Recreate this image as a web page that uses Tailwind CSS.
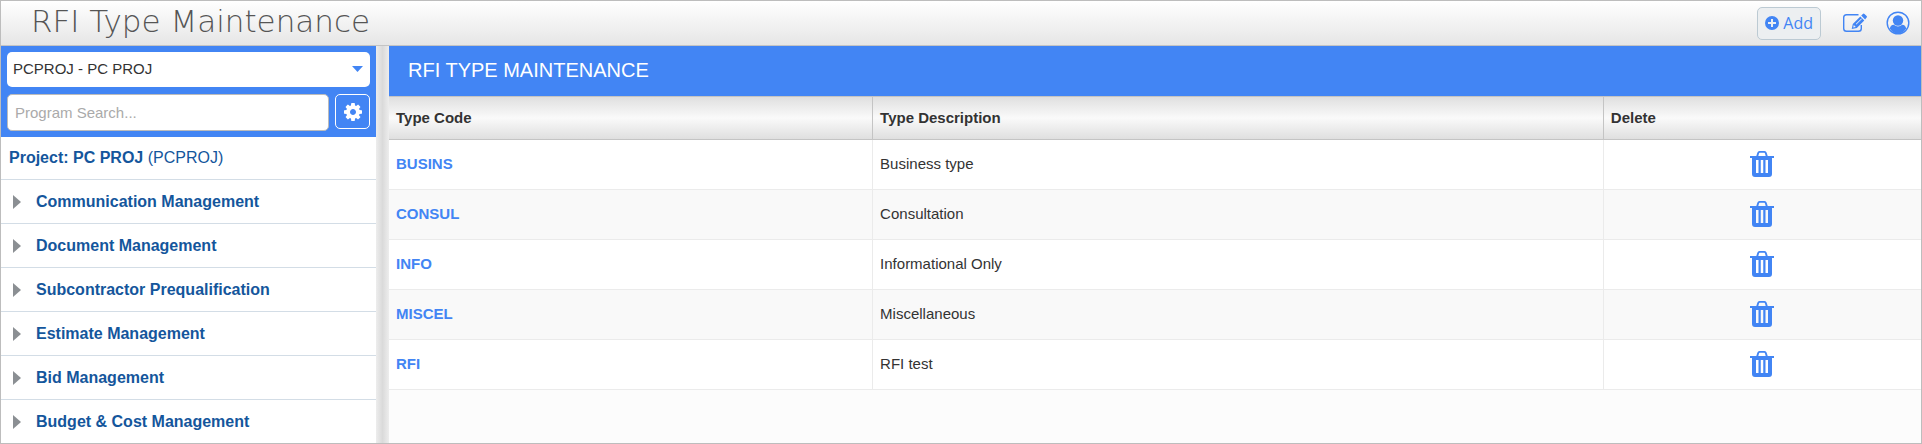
<!DOCTYPE html>
<html lang="en">
  <head>
    <meta charset="UTF-8" />
    <meta name="viewport" content="width=device-width, initial-scale=1.0" />
    <title>RFI Type Maintenance</title>
    <script src="https://cdn.jsdelivr.net/npm/@tailwindcss/browser@4"></script>
  </head>
  <body class="flex flex-col h-screen overflow-hidden border border-[#bdbdbd] bg-white font-['Liberation_Sans',Arial,sans-serif] text-[15px] text-[#333]">
    <!-- shared icons -->
    <svg class="hidden">
      <symbol id="trash" viewBox="0 0 24 26">
        <path fill-rule="evenodd" d="M0 5h6.300L7.300 1.800Q7.800 0 9.500 0h5Q16.200 0 16.700 1.800L17.700 5H24v2h-2v16q0 3-3 3H5q-3 0-3-3V7H0zM8.300 5h7.400l-.7-2.500Q14.800 1.800 14.300 1.800H9.700Q9.200 1.800 9 2.500zM6 9v13h2.500V9zm4.750 0v13h2.500V9zm4.750 0v13H18V9z" />
      </symbol>
      <symbol id="arrow" viewBox="0 0 8 14">
        <path d="M0 0l8 7-8 7z" />
      </symbol>
    </svg>

    <!-- top bar -->
    <header class="flex items-center justify-between h-[45px] shrink-0 border-b border-[#c4c4c4] bg-linear-to-b from-white to-[#e6e6e6] pl-[30px] pr-[11px]">
      <h1 class="font-['DejaVu_Sans',sans-serif] font-extralight text-[31px] leading-8 pb-1 text-[#555]">RFI Type Maintenance</h1>
      <div class="flex items-center">
        <button type="button" class="flex items-center gap-1 h-[33px] px-[7px] mr-[22px] rounded-[5px] border border-[#bccad3] bg-[#eceff1] font-['Open_Sans',sans-serif] text-base text-[#4285f4]">
          <svg class="size-[14px]" viewBox="0 0 14 14" fill="currentColor"><path fill-rule="evenodd" d="M7 0a7 7 0 1 1 0 14A7 7 0 0 1 7 0zM6 3v3H3v2h3v3h2V8h3V6H8V3z" /></svg>
          Add
        </button>
        <button type="button" aria-label="Edit" class="mr-[19px] text-[#4285f4]">
          <svg class="w-6 h-5" viewBox="0 0 24 20" fill="none" stroke="currentColor" stroke-width="1.4"><path d="M15.500 1.700H3.500Q.700 1.700 .700 4.500v11q0 2.800 2.800 2.800h12q2.800 0 2.800-2.800V12" /><path fill="currentColor" stroke="none" fill-rule="evenodd" d="M8.700 16l1.100-5L17.300 3.500l4 4-7.500 7.500zM10.800 12l-.6 2.600 2.600-.7zM12.800 11l5.500-5.500.6.600-5.500 5.500zM18.200 2.600L19.900.9q.8-.8 1.600 0l2.100 2.100q.8.800 0 1.600L22.100 6.500z" /></svg>
        </button>
        <button type="button" aria-label="Account" class="text-[#4285f4]">
          <svg class="size-6" viewBox="0 0 24 24"><circle cx="12" cy="12" r="10.800" fill="none" stroke="currentColor" stroke-width="1.400" /><circle cx="12" cy="9.500" r="5.200" fill="currentColor" /><path fill="currentColor" d="M3.800 17.500Q4.500 14 7.800 13.800q4.200 3.400 8.400 0 3.300.2 4 3.700Q17 22.500 12 22.500t-8.200-5z" /></svg>
        </button>
      </div>
    </header>

    <div class="flex flex-1 min-h-0">
      <!-- sidebar -->
      <aside class="w-[375px] shrink-0 overflow-hidden text-base text-[#14569c]">
        <div class="flex flex-col gap-[7px] h-[91px] bg-[#4285f4] p-[6px] text-[15px]">
          <div class="relative">
            <select aria-label="Project" class="appearance-none block w-full h-[35px] rounded-[5px] bg-white px-[6px] text-[#333]">
              <option>PCPROJ - PC PROJ</option>
            </select>
            <svg class="absolute right-[7px] top-[14px] w-[11px] h-[6px] pointer-events-none" viewBox="0 0 11 6" fill="#4285f4"><path d="M0 0h11L5.500 6z" /></svg>
          </div>
          <div class="flex gap-[6px]">
            <input type="text" aria-label="Program Search" placeholder="Program Search..." class="flex-1 min-w-0 h-[37px] rounded-[5px] border border-[#bbb] bg-white px-[7px] placeholder:text-[#aaa]" />
            <button type="button" aria-label="Settings" class="flex items-center justify-center size-[35px] rounded-[5px] border border-white text-white">
              <svg class="size-[18px]" viewBox="0 0 1536 1536" fill="currentColor"><path d="M1024 768q0-106-75-181t-181-75-181 75-75 181 75 181 181 75 181-75 75-181zm512-109v222q0 12-8 23t-20 13l-185 28q-19 54-39 91 35 50 107 138 10 12 10 25t-9 23q-27 37-99 108t-94 71q-12 0-26-9l-138-108q-44 23-91 38-16 136-29 186-7 28-36 28H657q-14 0-24.500-8.500T621 1506l-28-184q-49-16-90-37l-141 107q-10 9-25 9-14 0-25-11-126-114-165-168-7-10-7-23 0-12 8-23 15-21 51-66.500t54-70.500q-27-50-41-99L29 913q-13-2-21-12.500T0 877V655q0-12 8-23t19-13l186-28q14-46 39-92-40-57-107-138-10-12-10-24 0-10 9-23 26-36 98.500-107.500T337 135q13 0 26 10l138 107q44-23 91-38 16-136 29-186 7-28 36-28h222q14 0 24.500 8.500T915 30l28 184q49 16 90 37l142-107q9-9 24-9 13 0 25 10 129 119 165 170 7 8 7 22 0 12-8 23-15 21-51 66.500t-54 70.500q26 50 41 98l183 28q13 2 21 12.500t8 23.500z" /></svg>
            </button>
          </div>
        </div>
        <div class="flex items-center h-[43px] border-b border-[#d3dde6] px-2 whitespace-pre"><b>Project: PC PROJ</b> (PCPROJ)</div>
        <nav class="font-bold">
          <a href="#" class="flex items-center gap-[15px] h-11 border-b border-[#d3dde6] pl-3"><svg class="w-2 h-[14px]" fill="#8b8f93"><use href="#arrow" /></svg>Communication Management</a>
          <a href="#" class="flex items-center gap-[15px] h-11 border-b border-[#d3dde6] pl-3"><svg class="w-2 h-[14px]" fill="#8b8f93"><use href="#arrow" /></svg>Document Management</a>
          <a href="#" class="flex items-center gap-[15px] h-11 border-b border-[#d3dde6] pl-3"><svg class="w-2 h-[14px]" fill="#8b8f93"><use href="#arrow" /></svg>Subcontractor Prequalification</a>
          <a href="#" class="flex items-center gap-[15px] h-11 border-b border-[#d3dde6] pl-3"><svg class="w-2 h-[14px]" fill="#8b8f93"><use href="#arrow" /></svg>Estimate Management</a>
          <a href="#" class="flex items-center gap-[15px] h-11 border-b border-[#d3dde6] pl-3"><svg class="w-2 h-[14px]" fill="#8b8f93"><use href="#arrow" /></svg>Bid Management</a>
          <a href="#" class="flex items-center gap-[15px] h-11 pl-3"><svg class="w-2 h-[14px]" fill="#8b8f93"><use href="#arrow" /></svg>Budget &amp; Cost Management</a>
        </nav>
      </aside>

      <!-- splitter -->
      <div class="w-[13px] shrink-0 bg-linear-to-r from-[#ededed] via-[#dadada] to-[#ededed]"></div>

      <!-- content -->
      <main class="flex-1 min-w-0 bg-[#fcfcfc]">
        <h2 class="flex items-center h-[50px] bg-[#4285f4] pl-[19px] pb-[2px] text-xl text-white">RFI TYPE MAINTENANCE</h2>
        <table class="w-full table-fixed border-separate border-spacing-0">
          <thead>
            <tr class="h-11 bg-linear-to-b from-[#dedede] via-[#fafafa] to-[#dedede] text-left">
              <th class="w-[31.6%] border-y border-r border-[#c4c4c4] px-[7px]">Type Code</th>
              <th class="w-[47.7%] border-y border-r border-[#c4c4c4] px-[7px]">Type Description</th>
              <th class="border-y border-[#c4c4c4] px-[7px]">Delete</th>
            </tr>
          </thead>
          <tbody>
            <tr class="h-[50px] bg-white">
              <td class="border-b border-r border-[#ebebeb] px-[7px]"><a href="#" class="font-bold text-[#4285f4]">BUSINS</a></td>
              <td class="border-b border-r border-[#ebebeb] px-[7px]">Business type</td>
              <td class="border-b border-[#ebebeb] pb-[2px]"><button type="button" aria-label="Delete BUSINS" class="block mx-auto text-[#4285f4]"><svg class="w-6 h-[26px]" fill="currentColor"><use href="#trash" /></svg></button></td>
            </tr>
            <tr class="h-[50px] bg-[#f9f9f9]">
              <td class="border-b border-r border-[#ebebeb] px-[7px]"><a href="#" class="font-bold text-[#4285f4]">CONSUL</a></td>
              <td class="border-b border-r border-[#ebebeb] px-[7px]">Consultation</td>
              <td class="border-b border-[#ebebeb] pb-[2px]"><button type="button" aria-label="Delete CONSUL" class="block mx-auto text-[#4285f4]"><svg class="w-6 h-[26px]" fill="currentColor"><use href="#trash" /></svg></button></td>
            </tr>
            <tr class="h-[50px] bg-white">
              <td class="border-b border-r border-[#ebebeb] px-[7px]"><a href="#" class="font-bold text-[#4285f4]">INFO</a></td>
              <td class="border-b border-r border-[#ebebeb] px-[7px]">Informational Only</td>
              <td class="border-b border-[#ebebeb] pb-[2px]"><button type="button" aria-label="Delete INFO" class="block mx-auto text-[#4285f4]"><svg class="w-6 h-[26px]" fill="currentColor"><use href="#trash" /></svg></button></td>
            </tr>
            <tr class="h-[50px] bg-[#f9f9f9]">
              <td class="border-b border-r border-[#ebebeb] px-[7px]"><a href="#" class="font-bold text-[#4285f4]">MISCEL</a></td>
              <td class="border-b border-r border-[#ebebeb] px-[7px]">Miscellaneous</td>
              <td class="border-b border-[#ebebeb] pb-[2px]"><button type="button" aria-label="Delete MISCEL" class="block mx-auto text-[#4285f4]"><svg class="w-6 h-[26px]" fill="currentColor"><use href="#trash" /></svg></button></td>
            </tr>
            <tr class="h-[50px] bg-white">
              <td class="border-b border-r border-[#ebebeb] px-[7px]"><a href="#" class="font-bold text-[#4285f4]">RFI</a></td>
              <td class="border-b border-r border-[#ebebeb] px-[7px]">RFI test</td>
              <td class="border-b border-[#ebebeb] pb-[2px]"><button type="button" aria-label="Delete RFI" class="block mx-auto text-[#4285f4]"><svg class="w-6 h-[26px]" fill="currentColor"><use href="#trash" /></svg></button></td>
            </tr>
          </tbody>
        </table>
      </main>
    </div>
  </body>
</html>
